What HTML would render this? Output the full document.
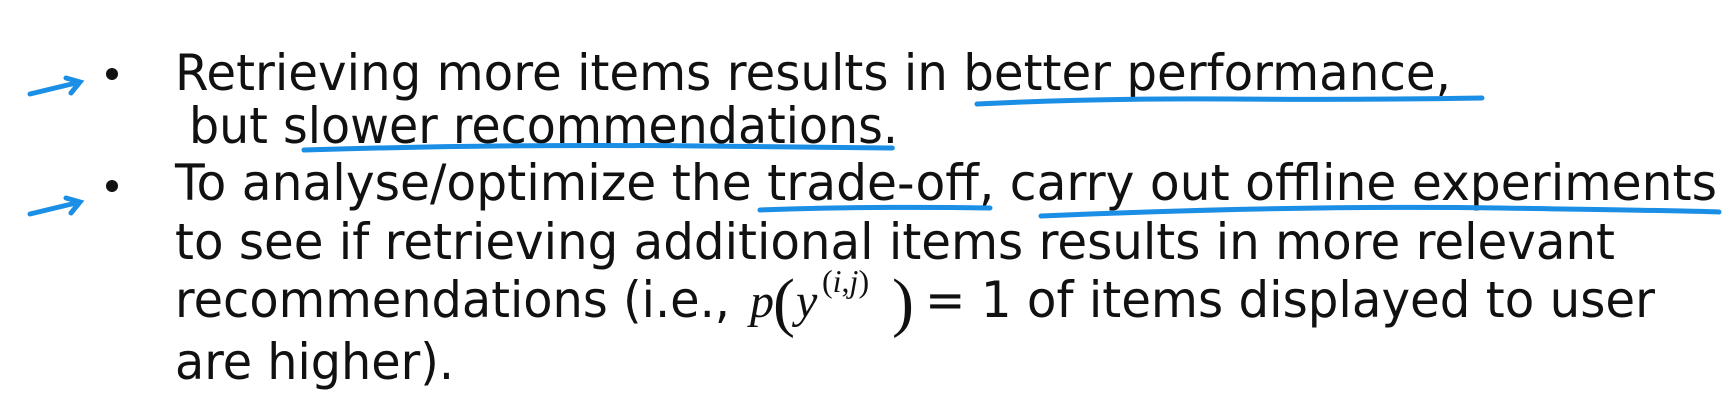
<!DOCTYPE html>
<html><head><meta charset="utf-8"><style>
html,body{margin:0;padding:0;background:#fff;width:1736px;height:416px;overflow:hidden}
svg{display:block}
.t{font-family:"DejaVu Sans","Liberation Sans",sans-serif;font-size:50px;fill:#111}
.m{font-family:"Liberation Serif",serif;font-style:italic;fill:#111}
.u{stroke:#1b8ee6;stroke-width:5;fill:none;stroke-linecap:round}
</style></head><body>
<svg width="1736" height="416" viewBox="0 0 1736 416">
<path class="u" d="M30 94 Q55 88 80 82 M66 78 L80 82 L71 93"/>
<path class="u" d="M30 214 Q55 208 80 202 M66 198 L80 202 L71 213"/>
<circle cx="112" cy="74" r="6" fill="#111"/>
<circle cx="112" cy="186" r="6" fill="#111"/>
<text class="t" x="175" y="90" textLength="1276" lengthAdjust="spacingAndGlyphs">Retrieving more items results in better performance,</text>
<text class="t" x="189" y="143" textLength="709" lengthAdjust="spacingAndGlyphs">but slower recommendations.</text>
<text class="t" x="175" y="200" textLength="1542" lengthAdjust="spacingAndGlyphs">To analyse/optimize the trade-off, carry out offline experiments</text>
<text class="t" x="175" y="259" textLength="1440" lengthAdjust="spacingAndGlyphs">to see if retrieving additional items results in more relevant</text>
<text class="t" x="175" y="317" textLength="555" lengthAdjust="spacingAndGlyphs">recommendations (i.e.,</text>
<text class="m" x="750" y="317" font-size="48">p</text>
<text x="773" y="324" font-family="Liberation Serif,serif" font-size="66" fill="#111">(</text>
<text class="m" x="796" y="317" font-size="48">y</text>
<text x="822" y="292" font-family="Liberation Serif,serif" font-size="32" fill="#111">(<tspan font-style="italic">i</tspan>,<tspan font-style="italic">j</tspan>)</text>
<text x="892" y="324" font-family="Liberation Serif,serif" font-size="66" fill="#111">)</text>
<text class="t" x="925" y="317" textLength="730" lengthAdjust="spacingAndGlyphs">= 1 of items displayed to user</text>
<text class="t" x="175" y="379" textLength="279" lengthAdjust="spacingAndGlyphs">are higher).</text>
<path class="u" d="M977 104 Q1100 98 1230 99 T1482 98"/>
<path class="u" d="M304 150 Q500 144 700 146 T892 148"/>
<path class="u" d="M760 210 Q870 206 990 208"/>
<path class="u" d="M1041 216 Q1300 205 1500 208 T1719 212"/>
</svg>
</body></html>
